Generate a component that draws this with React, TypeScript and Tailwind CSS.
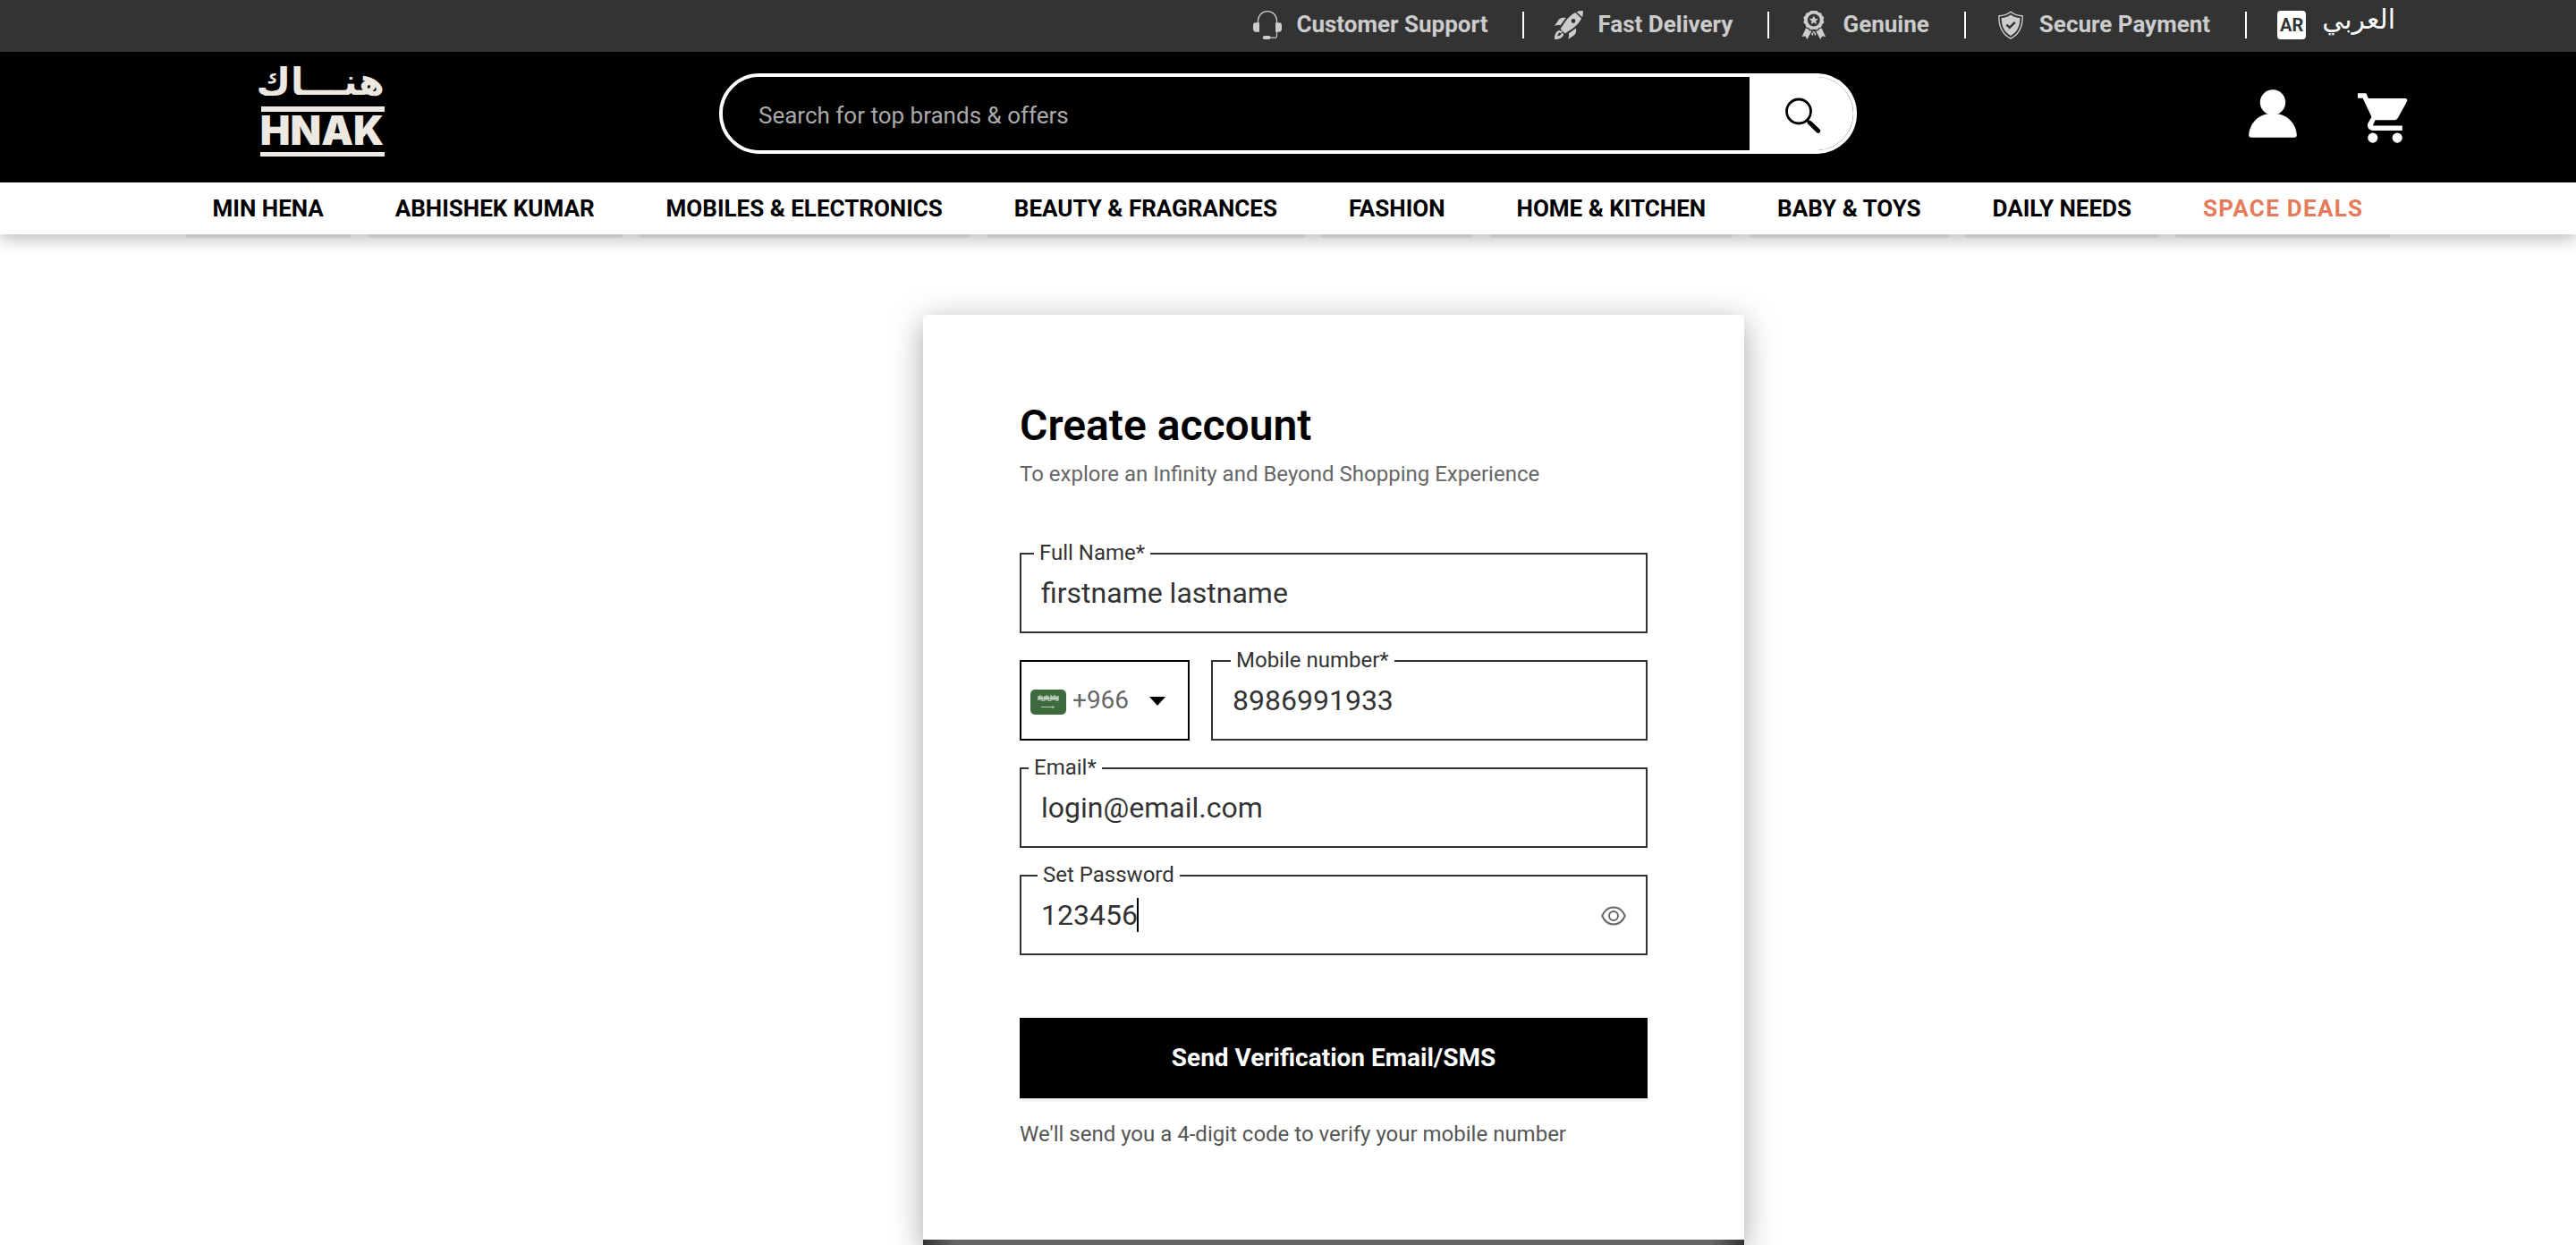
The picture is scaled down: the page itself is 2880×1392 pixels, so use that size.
import React, { useState } from 'react';

const perks = [
  { label: 'Customer Support', icon: <HeadsetIcon /> },
  { label: 'Fast Delivery', icon: <RocketIcon /> },
  { label: 'Genuine', icon: <MedalIcon /> },
  { label: 'Secure Payment', icon: <ShieldIcon /> },
];

const categories = [
  'MIN HENA',
  'ABHISHEK KUMAR',
  'MOBILES & ELECTRONICS',
  'BEAUTY & FRAGRANCES',
  'FASHION',
  'HOME & KITCHEN',
  'BABY & TOYS',
  'DAILY NEEDS',
];

function HeadsetIcon() {
  return (
    <svg viewBox="0 0 32 32" className="size-8" fill="none" aria-hidden="true">
      <path d="M5.5 14V11.2a10.5 10.5 0 0 1 21 0V28.6a1.6 1.6 0 0 1-1.6 1.6H18" stroke="#ccc" strokeWidth="1.2" />
      <path d="M3.4 13.2H7v10.6H3.4A3.2 3.2 0 0 1 0 20.4v-4a3.2 3.2 0 0 1 3.4-3.2ZM25 13.2h3.6a3.2 3.2 0 0 1 3.4 3.2v4a3.2 3.2 0 0 1-3.4 3.4H25Z" fill="#ccc" />
      <rect x="10.8" y="28" width="8.6" height="4" rx="1.8" fill="#ccc" />
    </svg>
  );
}

function RocketIcon() {
  return (
    <svg viewBox="0 0 32 32" className="size-8" fill="#ccc" aria-hidden="true">
      <path d="M31.8.2C29.5-.1 27 .3 24.7 1.2l6.1 6.1C31.8 5 32.1 2.500 31.800.2Z" />
      <path fillRule="evenodd" d="M23.300 1.900C19 4 15.300 7.600 12.300 11.700L6.600 20.300l5.100 5.100 8.600-5.700c4.200-3 7.700-6.700 9.800-11ZM21 9.100a2.400 2.400 0 1 1 0 4.800 2.400 2.400 0 0 1 0-4.800Z" />
      <path d="M12.600 8.100C8.500 7.100 5.500 8.300 3.700 11.400L0 16.900c2.400-1 4.700-1.200 6.600-.7ZM23.900 19.400c1 4.100-.2 7.100-3.300 8.900L15.100 32c1-2.400 1.200-4.700.7-6.600Z" />
      <path d="M5.800 21.800C1.500 22.800 0 26.800 0 32c5.200 0 9.200-1.500 10.200-5.800l-2-2c-.2 2.300-2 3.800-5 4.300.5-2.700 1.800-4.500 4.300-5Z" />
      <path d="M6.800 25.200 9 23l-1-1-2.700 2.600Z" />
    </svg>
  );
}

function MedalIcon() {
  return (
    <svg viewBox="0 0 32 32" className="size-8" fill="#ccc" aria-hidden="true">
      <path
        fillRule="evenodd"
        d="M12.200 0h7.200l1.900 1.900 2.800.7 1.200 2.800 2 2-.8 2.900.8 2.900-2 2-1.200 3.300-2.800.7-1.900 2.100-3.600-.6-3.600.6-1.900-2.100-2.800-.7-1.200-3.300-2-2 .8-2.900-.8-2.900 2-2 1.200-2.800 2.800-.7ZM15.800 3.600a6.900 6.900 0 1 0 0 13.800 6.900 6.900 0 0 0 0-13.800Z"
      />
      <path d="m15.800 5.400 1.500 3.300 3.500.4-2.600 2.400.7 3.500-3.100-1.800-3.100 1.800.7-3.500-2.600-2.400 3.500-.4Z" />
      <path d="M7 19.600 2.600 29l3.700-.6L8.500 32l5-9.600-2.300.2-1.800-2.400ZM24.600 19.600 29 29l-3.700-.6L23.100 32l-5-9.600 2.300.2 1.800-2.400ZM13 26l2.800-3.600L18.600 26l-2.800 4Z" />
      <path d="M15.800 23.500 18 32h-4.400Z" fill="#333" />
    </svg>
  );
}

function ShieldIcon() {
  return (
    <svg viewBox="0 0 32 32" className="size-8" fill="none" aria-hidden="true">
      <path d="M16 1.200c3.600 2.800 8 4.400 13.200 4.600.2 12.600-3.700 20.700-13.200 25.200C6.500 26.500 2.600 18.400 2.800 5.800 8 5.600 12.400 4 16 1.200Z" stroke="#ccc" strokeWidth="1.400" />
      <path d="M16 4.400c3 2.100 6.500 3.300 10.400 3.700-.1 9.800-3.200 16-10.400 19.800C8.800 24.100 5.700 17.900 5.600 8.100 9.500 7.700 13 6.500 16 4.400Z" fill="#ccc" />
      <path d="m11.400 15.600 3.400 3.200 6-6" stroke="#333" strokeWidth="2.400" />
    </svg>
  );
}

function Logo() {
  return (
    <a href="#home" aria-label="Hnak home" className="block text-[#ede8e1]">
      <svg viewBox="0 0 140 102" className="h-[102px] w-[140px] overflow-visible" fill="currentColor">
        <text x="140" y="32" textAnchor="start" direction="rtl" fontFamily="'DejaVu Sans', sans-serif" fontWeight="700" fontSize="42">
          هنـــاك
        </text>
        <rect x="2" y="45" width="138" height="6" />
        <text x="70" y="88" textAnchor="middle" fontFamily="Inter, sans-serif" fontWeight="900" fontSize="45">
          HNAK
        </text>
        <rect x="1" y="96" width="139" height="5" />
      </svg>
    </a>
  );
}

type FieldProps = {
  id: string;
  label: string;
  value: string;
  labelPlace: string;
  type?: string;
  className?: string;
  children?: React.ReactNode;
};

function Field({ id, label, value, labelPlace, type = 'text', className = '', children }: FieldProps) {
  const [text, setText] = useState(value);
  return (
    <div className={`relative ${className}`}>
      <label htmlFor={id} className={`absolute -top-3.5 bg-white px-1.5 text-[24px] leading-7 ${labelPlace}`}>
        {label}
      </label>
      <input
        id={id}
        type={type}
        value={text}
        onChange={(e) => setText(e.target.value)}
        className="block h-[90px] w-full border-2 border-[#333] bg-white px-[22px] text-[32px] outline-none"
      />
      {children}
    </div>
  );
}

export default function App() {
  return (
    <div className="min-h-screen bg-white font-['Roboto',sans-serif] text-[#333]">
      <div className="flex h-[58px] items-start justify-end bg-[#333] pt-3 pr-[202px] text-[26px] font-bold leading-[30px] text-[#ccc]">
        {perks.map((perk) => (
          <div key={perk.label} className="flex items-center">
            <a href="#info" className="flex items-start gap-4 pr-[39px] whitespace-nowrap">
              {perk.icon}
              {perk.label}
            </a>
            <span className="mr-[34px] h-[30px] w-0.5 bg-white" />
          </div>
        ))}
        <a href="#ar" className="flex items-start gap-[18px] text-white">
          <span className="flex size-8 items-center justify-center rounded bg-white text-[20px] leading-none text-[#333]">AR</span>
          <span lang="ar" dir="rtl" className="font-['DejaVu_Sans',sans-serif] text-[30px] font-normal leading-5">
            العربي
          </span>
        </a>
      </div>

      <header className="grid h-[146px] grid-cols-[1fr_1272px_1fr] items-start bg-black">
        <div className="pt-4 pl-[290px]">
          <Logo />
        </div>
        <form role="search" className="mt-6 flex h-[90px] overflow-hidden rounded-[45px] border-4 border-white" onSubmit={(e) => e.preventDefault()}>
          <input
            type="search"
            aria-label="Search"
            placeholder="Search for top brands & offers"
            className="min-w-0 flex-1 bg-black px-10 pt-1 text-[26px] text-white outline-none placeholder:text-[#aaa]"
          />
          <button type="submit" aria-label="Search" className="flex w-29 items-center justify-center bg-white pt-1 pl-1">
            <svg viewBox="0 0 40 40" className="size-10" fill="none" stroke="#000">
              <circle cx="15" cy="15.500" r="13.500" strokeWidth="2.800" />
              <path d="m24.500 25.500 3 3" strokeWidth="3" />
              <path d="m27.300 28.300 9.400 9" strokeWidth="5" strokeLinecap="round" />
            </svg>
          </button>
        </form>
        <div className="flex items-start justify-end gap-[68px] pt-[42px] pr-[188px]">
          <button type="button" aria-label="Account">
            <svg viewBox="0 0 54 54" className="size-[54px]" fill="#fff">
              <circle cx="27" cy="14.500" r="14.200" />
              <path d="M20 27.500h14C45 30 53 39 53.800 50.500a3 3 0 0 1-3 3.300H3.200a3 3 0 0 1-3-3.300C1 39 9 30 20 27.500Z" />
            </svg>
          </button>
          <button type="button" aria-label="Cart" className="pt-1">
            <svg viewBox="0 0 56 56" className="size-14" fill="#fff">
              <path d="M0 .3v5.500h5.600l9.900 20.900-3.900 6.900c-2 3.800.7 8.300 5 8.300h33.200v-5.500H17.800c-.5 0-.8-.6-.6-1l2.400-5.100h20.600c2.100 0 4-1.100 4.900-2.900l9.900-18c1-1.900-.3-3.500-2.400-3.500H11.900L9.300.3Z" />
              <circle cx="16.800" cy="50.100" r="5.600" />
              <circle cx="44.200" cy="50.100" r="5.600" />
            </svg>
          </button>
        </div>
      </header>

      <nav className="flex h-[58px] justify-center gap-5 bg-white text-[26px] font-bold text-black shadow-[0_4px_20px_rgba(0,0,0,0.3)]">
        {categories.map((name) => (
          <a key={name} href="#category" className="flex items-center px-[30px] whitespace-nowrap shadow-[0_4px_0_rgba(0,0,0,0.06)]">
            {name}
          </a>
        ))}
        <a href="#deals" className="flex items-center px-[30px] tracking-wider whitespace-nowrap text-[#e47b5b] shadow-[0_4px_0_rgba(0,0,0,0.06)]">
          SPACE DEALS
        </a>
      </nav>

      <main className="flex justify-center pt-[90px] pl-[102px]">
        <section className="w-[918px] rounded-t bg-white shadow-[0_8px_36px_rgba(0,0,0,0.35)]">
          <form className="px-[108px] pt-24 pb-[102px]" onSubmit={(e) => e.preventDefault()}>
            <h1 className="text-[48px] leading-14 font-semibold text-black">Create account</h1>
            <p className="mt-2.5 text-[24px] leading-8 text-[#666]">To explore an Infinity and Beyond Shopping Experience</p>

            <div className="mt-[72px] flex flex-col gap-[30px]">
              <Field id="name" label="Full Name*" value="firstname lastname" labelPlace="left-4" />
              <div className="flex gap-6">
                <div className="relative w-[190px]">
                  <svg viewBox="0 0 40 28" className="pointer-events-none absolute top-[33px] left-3 h-7 w-10" aria-hidden="true">
                    <rect width="40" height="28" rx="5" fill="#3e6b3e" />
                    <path d="M9 7v5M11 6v6M13 7v5h3V7M18 6v6M20 7v5h3V6M25 7v5M27 6v6M29 7v5h2V7M9 9.500h22" stroke="#e6eee6" strokeWidth="1.100" fill="none" />
                    <path d="M12 19.500h15M25 18.500v2.500" stroke="#b5c9b5" strokeWidth="1.200" />
                  </svg>
                  <select aria-label="Country code" className="h-[90px] w-full appearance-none border-2 border-black bg-transparent pl-[57px] text-[28px] text-[#666] outline-none">
                    <option>+966</option>
                  </select>
                  <svg viewBox="0 0 18 10" className="pointer-events-none absolute top-[41px] right-[27px] h-2.5 w-[18px]" aria-hidden="true">
                    <path d="M0 0h18L9 10Z" />
                  </svg>
                </div>
                <Field id="mobile" label="Mobile number*" value="8986991933" labelPlace="left-[22px]" type="tel" className="flex-1" />
              </div>
              <Field id="email" label="Email*" value="login@email.com" labelPlace="left-2.5" />
              <Field id="password" label="Set Password" value="123456" labelPlace="left-5">
                <span className="absolute top-[26px] left-[131px] h-[38px] w-0.5 bg-black" />
                <button type="button" aria-label="Show password" className="absolute top-[34px] right-6">
                  <svg viewBox="0 0 28 24" className="h-6 w-7" fill="none" stroke="#666" strokeWidth="2">
                    <path d="M1.200 12C4 5.500 8.500 2.600 14 2.600S24 5.500 26.800 12C24 18.500 19.500 21.400 14 21.400S4 18.500 1.200 12Z" />
                    <circle cx="14" cy="12" r="5" />
                  </svg>
                </button>
              </Field>
            </div>

            <button type="submit" className="mt-[70px] h-[90px] w-full bg-black text-[28px] font-bold text-white shadow-[0_4px_0_#f3f3f3]">
              Send Verification Email/SMS
            </button>
            <p className="mt-6 text-[24px] leading-8 text-[#555]">We'll send you a 4-digit code to verify your mobile number</p>
          </form>
          <div className="h-1.5 bg-[linear-gradient(to_right,#333,#666_4%,#666_96%,#333)]" />
        </section>
      </main>
    </div>
  );
}
